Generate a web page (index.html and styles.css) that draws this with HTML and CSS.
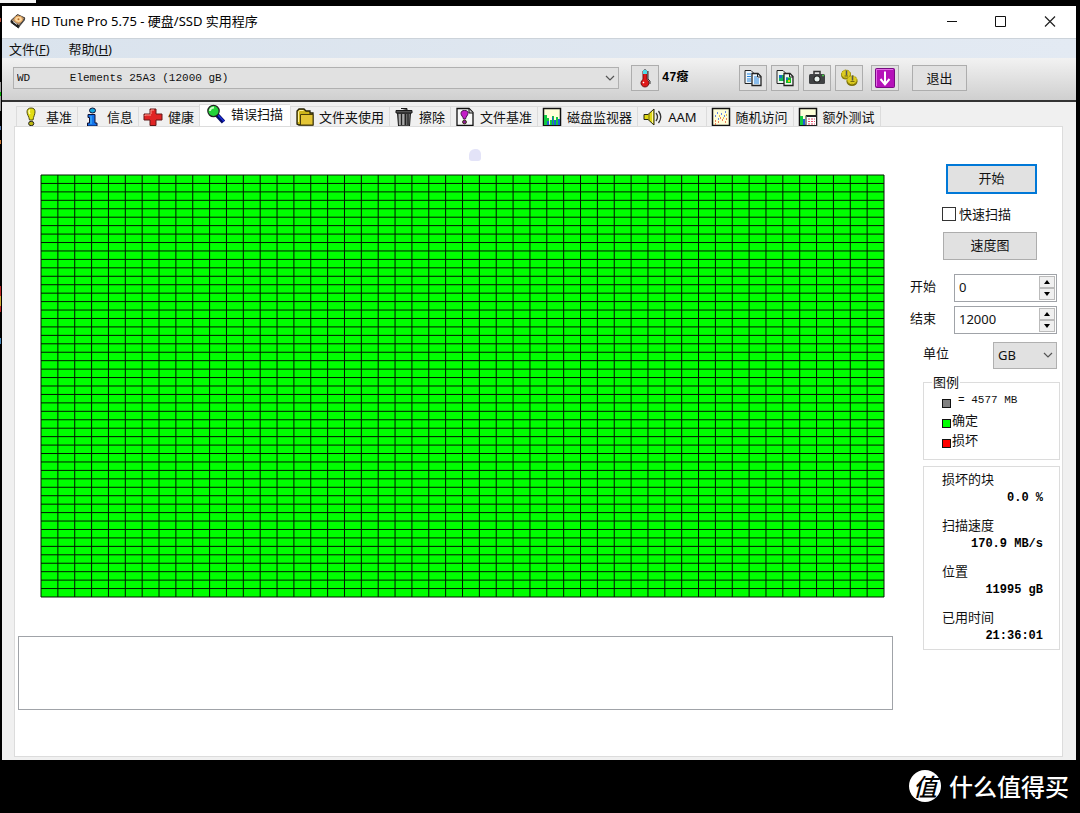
FILE: index.html
```html
<!DOCTYPE html>
<html lang="zh-CN">
<head>
<meta charset="utf-8">
<meta name="viewport" content="width=device-width, initial-scale=1">
<title>HD Tune Pro 5.75 - 硬盘/SSD 实用程序</title>
<link rel="stylesheet" href="styles.css">
</head>
<body>
<div class="edge-top"></div>
<div class="edge-left"></div>
<div class="window">
  <header class="titlebar">
    <svg class="app-icon" viewBox="0 0 16 16"><path d="M1 7.500 7.500 1.500 15 5 9 13z" fill="#a78a70" stroke="#403830"/><path d="M1 7.500v2L8.500 15l.5-2z" fill="#181818" stroke="#222"/><path d="M9 13l6-8v2l-6.500 8z" fill="#444"/><ellipse cx="8.500" cy="6.300" rx="4" ry="3.200" fill="#ffd9a0" stroke="#d99a55"/><circle cx="8.500" cy="6.300" r="1" fill="#b86c28"/><path d="M3 8.500l4 3" stroke="#ddd"/></svg>
    <h1 class="title">HD Tune Pro 5.75 - 硬盘/SSD 实用程序</h1>
    <div class="controls">
      <button class="ctl" aria-label="最小化"><svg viewBox="0 0 12 12"><path d="M1 6.500h10" stroke="#111"/></svg></button>
      <button class="ctl" aria-label="最大化"><svg viewBox="0 0 12 12"><path d="M.5 1.500h10v10H.5z" fill="none" stroke="#111"/></svg></button>
      <button class="ctl" aria-label="关闭"><svg viewBox="0 0 12 12"><path d="M1 1.500l10 10M11 1.500l-10 10" stroke="#222" stroke-width="1.200"/></svg></button>
    </div>
  </header>
  <nav class="menubar">
    <button class="menu">文件(<u>F</u>)</button>
    <button class="menu">帮助(<u>H</u>)</button>
  </nav>
  <div class="toolbar">
    <div class="combo drive">
      <select aria-label="驱动器"><option>WD&nbsp;&nbsp;&nbsp;&nbsp;&nbsp;&nbsp;Elements 25A3 (12000 gB)</option></select>
      <svg class="chevron" viewBox="0 0 10 6"><path d="M1 1l4 4 4-4" fill="none" stroke="#555" stroke-width="1.200"/></svg>
    </div>
    <button class="tool" aria-label="温度"><svg viewBox="0 0 20 20"><path d="M8 3q2-3 4 0v8.500a4 4 0 1 1-4 0z" fill="#e01818" stroke="#701010"/><path d="M8 2.500q2-2 4 0V6H8z" fill="#4ddbe8"/><path d="M13 3v8l2 2v3" fill="none" stroke="#333"/><path d="M8 15l1-1" stroke="#fff" stroke-width="1.500"/></svg></button>
    <output class="temp">47癈</output>
    <div class="tools">
      <button class="tool" aria-label="复制信息"><svg viewBox="0 0 20 20"><path d="M2 2.500h6l3 3v10H2z" fill="#eef6fc" stroke="#222"/><path d="M9 5.500h6l3 3v9H9z" fill="#eef6fc" stroke="#222" stroke-width="1.300"/><path d="M4 6h4M4 8.500h4M4 11h4M4 13h4M11 9h3M11 11h5M11 13h5M11 15h5" stroke="#2583dc"/><path d="M14.500 6v3H18" fill="none" stroke="#222"/></svg></button>
      <button class="tool" aria-label="复制截图"><svg viewBox="0 0 20 20"><path d="M2 2.500h6l3 3v10H2z" fill="#eef6ee" stroke="#222"/><path d="M4 7h5v6H4z" fill="#15b85a"/><path d="M4 7h3v3H4z" fill="#1671c8"/><path d="M9 5.500h6l3 3v9H9z" fill="#eef6ee" stroke="#222" stroke-width="1.300"/><path d="M11 9.500h5V15h-5z" fill="#12c020"/><path d="M11 9.500h2V12h-2z" fill="#1671c8"/><path d="M13 12h2v2h-2z" fill="#e8c51c"/><path d="M14.500 6v3H18" fill="none" stroke="#222"/></svg></button>
      <button class="tool" aria-label="保存截图"><svg viewBox="0 0 20 20"><path d="M7 6V3.500h6V6" fill="none" stroke="#333" stroke-width="1.500"/><rect x="2" y="6" width="16" height="10" rx="1.500" fill="#404244"/><path d="M15 7.500h2" stroke="#4c4" stroke-width="1.500"/><circle cx="10" cy="11" r="3.600" fill="#222"/><circle cx="10" cy="11" r="2.500" fill="#e8f2ee"/></svg></button>
      <button class="tool" aria-label="选项"><svg viewBox="0 0 20 20"><ellipse cx="7" cy="7" rx="5" ry="4.500" fill="#8b7f0c"/><ellipse cx="13" cy="13.500" rx="5.500" ry="4.500" fill="#7b700a"/><ellipse cx="7" cy="6" rx="4.500" ry="4" fill="#dccb20" stroke="#a4970f" stroke-dasharray="2 1"/><ellipse cx="13" cy="12" rx="5" ry="4.200" fill="#dccb20" stroke="#a4970f" stroke-dasharray="2 1"/><path d="M7.500 2.500v5M13.500 7.500v5" stroke="#555" stroke-width="1.500"/><path d="M5.500 8h3.500M11.500 13.500h4" stroke="#776b0b"/></svg></button>
      <button class="tool save" aria-label="保存"><svg viewBox="0 0 20 20"><rect x=".5" y=".5" width="19" height="19" rx="1" fill="#b511b9" stroke="#770b80"/><path d="M1.500 18V1.500H18" fill="none" stroke="#e26ce6"/><path d="M10 3.500V15M5.500 11l4.500 5.500L14.500 11" fill="none" stroke="#fff" stroke-width="2"/></svg></button>
    </div>
    <button class="btn exit">退出</button>
  </div>
  <div class="body">
    <div class="tabs" role="tablist">
      <button class="tab" role="tab"><svg viewBox="0 0 20 20"><path d="M10 1c3 0 4 1.500 4 3.800 0 3-1.500 4.500-2 8.200H8.500C8 9.300 6 7.800 6 4.800 6 2.500 7.500 1 10 1z" fill="#e2dc13" stroke="#4f4c12"/><path d="M9 3q-2 1 0 4" stroke="#fffbb0" fill="none" stroke-width="1.500"/><ellipse cx="10.200" cy="16.500" rx="2.600" ry="2.200" fill="#bdb80e" stroke="#222"/></svg>基准</button>
      <button class="tab" role="tab"><svg viewBox="0 0 20 20"><ellipse cx="10.500" cy="3.500" rx="3" ry="2.500" fill="#13a5dd" stroke="#113"/><path d="M6 7.500h7V16h2v3H5.500v-3h2v-5.500H6z" fill="#1473ea" stroke="#113"/><path d="M9 9v8" stroke="#4cc4ff"/></svg>信息</button>
      <button class="tab" role="tab"><svg viewBox="0 0 20 20"><path d="M7 2h6v5h6v6h-6v5.500H7V13H1V7h6z" fill="#e02424" stroke="#621818"/><path d="M8 7V3h3M2 9V8h6" fill="none" stroke="#ff9b8d"/></svg>健康</button>
      <button class="tab selected" role="tab" aria-selected="true"><svg viewBox="0 0 20 20"><path d="M11 11l6.500 7" stroke="#050b66" stroke-width="4.500"/><path d="M12 11l6 6.500" stroke="#1b2bd8" stroke-width="1.500"/><circle cx="7.500" cy="7" r="5.700" fill="#24d43a" stroke="#222" stroke-width="1.200"/><path d="M4 7q0-3 4-3.500" fill="none" stroke="#caffc5" stroke-width="2"/></svg>错误扫描</button>
      <button class="tab folder" role="tab"><svg viewBox="0 0 20 20"><path d="M2 17V4l2-2h5l2 2h4v2h3v12H4z" fill="#cdb41b" stroke="#262209" stroke-width="1.300"/><path d="M5.500 7.500H18V18H5.500z" fill="#e4c535" stroke="#4a3e09"/><path d="M3.500 15V5l1-1.500h4" fill="none" stroke="#fff29b"/></svg>文件夹使用</button>
      <button class="tab" role="tab"><svg viewBox="0 0 20 20"><path d="M3.500 6h13l-1 13h-11z" fill="#777" stroke="#181818"/><path d="M2 3.500h16V6H2zM7 1.500h6v2" fill="#555" stroke="#181818"/><path d="M6 7v11M9 7v11" stroke="#ccc" stroke-width="1.200"/><path d="M7.500 7v11M11.500 7v11M14 7v11" stroke="#222" stroke-width="1.300"/></svg>擦除</button>
      <button class="tab" role="tab"><svg viewBox="0 0 20 20"><path d="M2 1.500h12l4 4v13H2z" fill="#f8f8f8" stroke="#111" stroke-width="1.300"/><path d="M14 2v4h4" fill="#ccc" stroke="#111"/><path d="M9.500 3.500c3 0 3.800 1.200 3.500 3-.3 2-2 3-2.500 5.500h-2C8 9.500 6 8.500 6 6.500c0-2 1-3 3.500-3z" fill="#c41bc8" stroke="#43104b"/><circle cx="9.500" cy="15" r="1.900" fill="#901b98" stroke="#331"/></svg>文件基准</button>
      <button class="tab" role="tab"><svg viewBox="0 0 20 20"><path d="M1.500 1.500h17v17h-17z" fill="#ffffd8" stroke="#111" stroke-width="1.500"/><path d="M2 18V8h3v3h2v7zM8 18v-5h2V9h2v9zM14 18v-8h2v8z" fill="#13c940"/><path d="M5 18v-4h2v4zM10 18v-8h1v8zM12 18v-5h2v5zM16 18v-6h2v6z" fill="#225bd5"/></svg>磁盘监视器</button>
      <button class="tab wide" role="tab"><svg viewBox="0 0 20 20"><path d="M1 7.500h4L11 2v16l-6-5.500H1z" fill="#dfd815" stroke="#252512"/><path d="M6 7v6" stroke="#776f0b"/><path d="M9.500 4v12" stroke="#fff79b"/><path d="M13 6q3 4 0 8M15.500 4q4.500 6 0 12" fill="none" stroke="#333" stroke-width="1.300"/></svg>AAM</button>
      <button class="tab" role="tab"><svg viewBox="0 0 20 20"><path d="M1.500 1.500h17v17h-17z" fill="#ffffd8" stroke="#111" stroke-width="1.500"/><path d="M4 9h1M7 12h1M10 7h1M13 9h1M14 5h1M6 6h1" stroke="#345ee8" stroke-width="1.500"/><path d="M4 14h1M7 15h1M9 11h1M11 13h1M15 12h1M14 15h1M4 17h1" stroke="#ed5634" stroke-width="1.500"/><path d="M8 9h1M12 11h1M15 8h1" stroke="#d7a724" stroke-width="1.500"/></svg>随机访问</button>
      <button class="tab" role="tab"><svg viewBox="0 0 20 20"><path d="M1.500 1.500h17v17h-17z" fill="#ffffd8" stroke="#111" stroke-width="1.500"/><path d="M2 9h3v9H2z" fill="#13c940"/><path d="M5 12h2v6H5z" fill="#225bd5"/><path d="M8 8.500h10.500v10H8z" fill="#fff" stroke="#222"/><path d="M8.500 9h10" stroke="#222" stroke-width="2"/><path d="M10 12h7M10 14.500h7M10 17h7" stroke="#e44a68" stroke-dasharray="2 1"/></svg>额外测试</button>
    </div>
    <main class="panel">
      <div class="cursor-mark"></div>
      <section class="scan">
        <svg class="map" id="map" viewBox="0 0 50 50" preserveAspectRatio="none" role="img" aria-label="扫描块"><rect width="50" height="50" fill="#0f0"/><path class="lines" id="lines"/></svg>
        <textarea class="log" aria-label="日志" readonly></textarea>
      </section>
      <aside class="side">
        <div class="actions">
          <button class="btn primary">开始</button>
          <label class="check"><input type="checkbox">快速扫描</label>
          <button class="btn speed">速度图</button>
        </div>
        <div class="field"><label for="start">开始</label>
          <div class="spin"><input id="start" type="text" value="0"><div class="arrows"><button class="arrow" aria-label="增加"><i class="up"></i></button><button class="arrow" aria-label="减少"><i class="down"></i></button></div></div></div>
        <div class="field"><label for="end">结束</label>
          <div class="spin"><input id="end" type="text" value="12000"><div class="arrows"><button class="arrow" aria-label="增加"><i class="up"></i></button><button class="arrow" aria-label="减少"><i class="down"></i></button></div></div></div>
        <div class="field unit"><label for="unit">单位</label>
          <div class="combo"><select id="unit"><option>GB</option></select><svg class="chevron" viewBox="0 0 10 6"><path d="M1 1l4 4 4-4" fill="none" stroke="#555" stroke-width="1.200"/></svg></div></div>
        <fieldset class="legend">
          <legend>图例</legend>
          <div class="key"><i class="swatch gray"></i><span class="size">= 4577 MB</span></div>
          <div class="key"><i class="swatch green"></i><span>确定</span></div>
          <div class="key"><i class="swatch red"></i><span>损坏</span></div>
        </fieldset>
        <dl class="stats">
          <div><dt>损坏的块</dt><dd>0.0 %</dd></div>
          <div><dt>扫描速度</dt><dd>170.9 MB/s</dd></div>
          <div><dt>位置</dt><dd>11995 gB</dd></div>
          <div><dt>已用时间</dt><dd>21:36:01</dd></div>
        </dl>
      </aside>
    </main>
  </div>
</div>
<footer class="brand"><span class="seal">值</span><span>什么值得买</span></footer>
<script src="map.js"></script>
</body>
</html>
```
FILE: map.js
```js
// Block map: 50 columns by 50 rows.
var d = "";
for (var i = 0; i <= 50; i++) {
  d += "M" + i + " 0V50M0 " + i + "H50";
}
document.getElementById("lines").setAttribute("d", d);
```
FILE: styles.css
```css
* { box-sizing: border-box; }
body {
  margin: 0;
  min-height: 100vh;
  padding: 6px 4px 0 2px;
  display: flex;
  flex-direction: column;
  background: #000;
  color: #111;
  font: 13px/18px "Noto Sans", "Noto Sans CJK SC", sans-serif;
}
button, input, select, textarea { font: inherit; color: inherit; margin: 0; }
button { padding: 0; border: 0; background: none; }
svg { display: block; }

.edge-top { position: absolute; left: 0; top: 0; width: 36px; height: 3px; background: #f4f4f4; }
.edge-left {
  position: absolute; left: 0; top: 6px; width: 1px; height: 350px;
  background: linear-gradient(#000 12px, #a43 12px, #a43 16px, #000 16px, #000 76px, #999 76px, #999 86px, #0a0 86px, #0a0 90px, #999 90px, #999 105px, #000 105px, #000 120px, #57a 120px, #57a 124px, #000 124px, #000 134px, #c73 134px, #c73 138px, #000 138px, #000 280px, #b22 280px, #b22 290px, #ca3 290px, #ca3 300px, #b22 300px, #b22 306px, #000 306px, #000 332px, #48b 332px, #48b 338px, #000 338px);
}

.window { flex: 1; display: flex; flex-direction: column; background: #f0f0f0; }
.titlebar { display: flex; align-items: center; height: 32px; padding: 0 2px 2px 8px; gap: 5px; background: #fff; }
.app-icon { width: 16px; height: 16px; }
.title { flex: 1; margin: 0; font-size: 13px; font-weight: 400; color: #000; }
.controls { display: flex; }
.ctl { width: 49px; height: 30px; display: grid; place-items: center; }
.ctl svg { width: 12px; height: 12px; }

.menubar { display: flex; gap: 19px; height: 20px; padding-left: 7px; background: linear-gradient(90deg, #dae3ed, #e3eaf3); border-top: 1px solid #ccd3da; }
.menu { line-height: 18px; }

.toolbar {
  display: flex; align-items: center; height: 44px; padding: 0 109px 3px 11px;
  background: linear-gradient(#f2f2f2, #cfcfcf);
  border-bottom: 2px solid #333;
}
.combo { display: grid; align-items: center; }
.combo select {
  grid-area: 1 / 1; width: 100%; height: 22px; padding: 0 4px;
  appearance: none; border: 1px solid #b0b0b0; border-radius: 0; background: #e1e1e1;
}
.chevron { grid-area: 1 / 1; justify-self: end; width: 10px; height: 6px; margin-right: 4px; pointer-events: none; }
.drive { flex: 1; margin-right: 12px; }
.drive select { font: 11px/18px "Liberation Mono", monospace; padding-left: 3px; }
.tool, .btn { border: 1px solid #adadad; background: #e1e1e1; }
.tool { width: 28px; height: 26px; display: grid; place-items: center; }
.tool svg { width: 20px; height: 20px; }
.temp { width: 77px; margin-left: 3px; font: bold 12px/18px "Liberation Mono", "Noto Sans CJK SC", monospace; color: #000; }
.tools { display: flex; gap: 4px; }
.save { margin-left: 4px; }
.exit { width: 55px; height: 26px; margin-left: 13px; }

.body { flex: 1; display: flex; flex-direction: column; padding: 2px 13px 3px 12px; }
.tabs { display: flex; align-items: flex-end; padding-left: 2px; }
.tab {
  display: flex; align-items: center; gap: 5px; height: 20px; padding: 0 5px 0 4px;
  border: 1px solid #dcdcdc; border-width: 1px 0 0 1px; white-space: nowrap; line-height: 16px;
}
.tab svg { width: 20px; height: 20px; }
.tab.selected { height: 22px; padding: 0 7px 3px 6px; background: #fff; }
.tab.folder { gap: 4px; padding: 0 5px 0 4px; }
.tab.wide { padding: 0 9px 0 5px; }
.tab:last-child { border-right-width: 1px; }
.panel { position: relative; flex: 1; display: flex; gap: 17px; padding: 0 2px 0 3px; background: #fff; border: 1px solid #dcdcdc; }
.cursor-mark { position: absolute; left: 454px; top: 22px; width: 12px; height: 12px; border-radius: 6px 5px 3px 3px; background: #e3e3f8; }

.scan { flex: 1; display: flex; flex-direction: column; padding-top: 48px; }
.map { height: 422px; margin: 0 9px 0 23px; overflow: visible; }
.lines { fill: none; stroke: #001800; stroke-width: 1px; vector-effect: non-scaling-stroke; }
.log { height: 74px; margin-top: 39px; padding: 4px; border: 1px solid #a0a3a8; border-radius: 0; background: #fff; resize: none; outline: 0; }

.side { width: 150px; padding-top: 37px; }
.actions { display: flex; flex-direction: column; margin-bottom: 14px; padding: 0 23px 0 32px; }
.primary { height: 30px; margin-left: 4px; padding-bottom: 2px; border: 2px solid #0078d7; }
.check { display: flex; align-items: center; gap: 3px; margin: 11px 0 9px; white-space: nowrap; }
.check input { appearance: none; width: 14px; height: 14px; border: 1px solid #333; background: #fff; }
.speed { height: 28px; margin-left: 1px; padding-bottom: 2px; }
.field { display: flex; justify-content: space-between; align-items: center; height: 28px; margin-bottom: 4px; padding-right: 3px; }
.field label { padding-bottom: 4px; }
.spin { display: flex; width: 103px; height: 28px; border: 1px solid #a0a3a8; padding: 1px; background: #fff; }
.spin input { flex: 1; min-width: 0; padding: 0 2px 2px 3px; border: 0; background: none; outline: 0; }
.arrows { width: 16px; display: grid; grid-template-rows: 1fr 1fr; }
.arrow { display: grid; place-items: center; border: 1px solid #bbb; background: #f0f0f0; }
.up, .down { border: 3px solid transparent; }
.up { border-top: 0; border-bottom: 4px solid #000; }
.down { border-bottom: 0; border-top: 4px solid #000; }
.unit { margin: 7px 0 0; padding-left: 13px; }
.unit .combo { width: 64px; }
.unit select { height: 27px; }

.legend { height: 87px; margin: 4px 0 0 13px; padding: 1px 0 0 18px; border: 1px solid #dcdcdc; min-width: 0; }
.legend legend { margin-left: -10px; padding: 0 1px; }
.key { display: flex; align-items: flex-end; gap: 1px; height: 20px; line-height: 20px; }
.key:nth-of-type(1) { height: 18px; }
.swatch { width: 9px; height: 9px; margin-bottom: 2px; border: 1px solid #111; }
.gray { background: #808080; }
.green { background: #0f0; }
.red { background: #f00; }
.size { margin-left: 6px; font: 11px/20px "Liberation Mono", monospace; }
.stats { margin: 6px 0 0 13px; padding: 3px 16px 2px 18px; border: 1px solid #dcdcdc; }
.stats div { margin-bottom: 7px; }
.stats div:last-child { margin-bottom: 0; }
.stats dt { line-height: 18px; }
.stats dd { margin: 0; font: bold 12px/21px "Liberation Mono", monospace; color: #000; text-align: right; white-space: nowrap; }

.brand { display: flex; justify-content: flex-end; align-items: center; gap: 8px; height: 53px; padding: 0 7px 2px 0; color: #fff; font: 500 24px/32px "Noto Sans CJK SC", sans-serif; }
.seal { display: grid; place-items: center; width: 32px; height: 32px; border-radius: 50%; background: #fff; color: #000; font-style: italic; }
```
